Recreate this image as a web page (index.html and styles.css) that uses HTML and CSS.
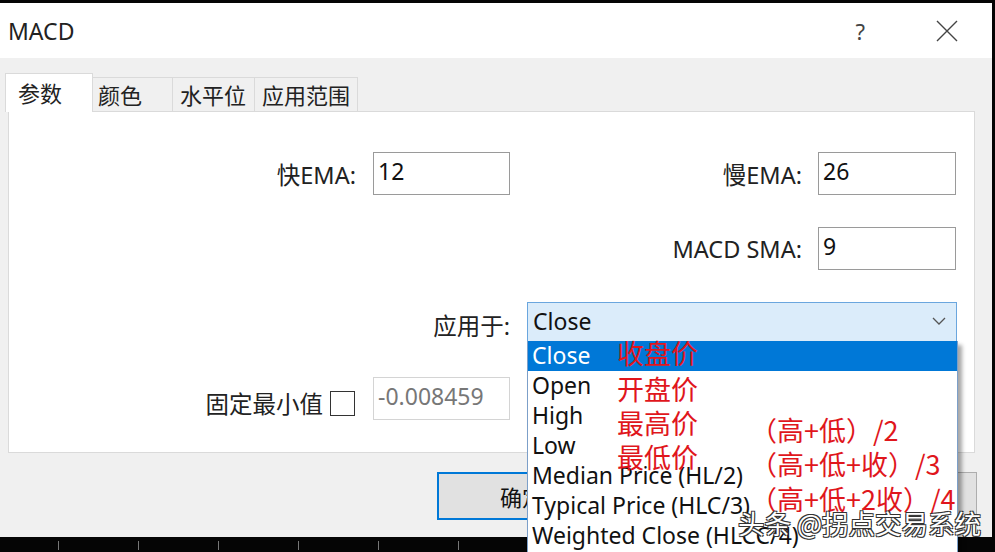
FILE: index.html
```html
<!DOCTYPE html>
<html lang="zh">
<head>
    <meta charset="UTF-8">
    <meta name="viewport" content="width=device-width, initial-scale=1.0">
    <title>MACD</title>
    <link rel="stylesheet" href="styles.css">
</head>
<body>
    <div class="screen">
        <div class="dialog">
            <div class="titlebar">
                <span class="title">MACD</span>
                <span class="help">?</span>
                <svg class="close" width="22" height="22" viewBox="0 0 22 22">
                    <path d="M1 1 L21 21 M21 1 L1 21" stroke="#444" stroke-width="1.4" fill="none"/>
                </svg>
            </div>

            <div class="tabs">
                <div class="tab active">参数</div>
                <div class="tab">颜色</div>
                <div class="tab">水平位</div>
                <div class="tab">应用范围</div>
            </div>

            <div class="panel">
                <div class="form">
                    <label class="label">快EMA:</label>
                    <input class="field" type="text" value="12">
                    <label class="label">慢EMA:</label>
                    <input class="field" type="text" value="26">

                    <label class="label col3">MACD SMA:</label>
                    <input class="field" type="text" value="9">

                    <label class="label wide">应用于:</label>
                    <div class="select">
                        <span>Close</span>
                        <svg class="chevron" width="14" height="8" viewBox="0 0 14 8">
                            <path d="M1 1 L7 7 L13 1" stroke="#555" stroke-width="1.3" fill="none"/>
                        </svg>
                        <ul class="list">
                            <li class="selected">Close</li>
                            <li>Open</li>
                            <li>High</li>
                            <li>Low</li>
                            <li>Median Price (HL/2)</li>
                            <li>Typical Price (HLC/3)</li>
                            <li>Weighted Close (HLCC/4)</li>
                            <!-- annotations drawn over the list -->
                            <span class="note n1">收盘价</span>
                            <span class="note n2">开盘价</span>
                            <span class="note n3">最高价</span>
                            <span class="note n4">最低价</span>
                            <span class="note n5">（高+低）/2</span>
                            <span class="note n6">（高+低+收）/3</span>
                            <span class="note n7">（高+低+2收）/4</span>
                        </ul>
                    </div>

                    <div class="label check-row">固定最小值 <span class="checkbox"></span></div>
                    <input class="field disabled" type="text" value="-0.008459" disabled>
                </div>
            </div>

            <div class="buttons">
                <button class="btn default">确定</button>
                <button class="btn">取消</button>
                <button class="btn">重置</button>
            </div>
        </div>
        <div class="axis"></div>
        <div class="watermark">头条 @拐点交易系统</div>
    </div>
</body>
</html>
```

FILE: styles.css
```css
body {
    margin: 0;
    padding: 0;
    background-color: #000;
    font-family: "Noto Sans", "Noto Sans CJK SC", sans-serif;
    color: #1a1a1a;
}
.screen {
    position: relative;
    width: 995px;
    height: 552px;
    padding-top: 3px;
    box-sizing: border-box;
    overflow: hidden;
    background-color: #050505;
}
.dialog {
    width: 992px;
    height: 534px;
    background-color: #f0f0f0;
}
.titlebar {
    height: 55px;
    display: flex;
    align-items: center;
    background-color: #fff;
}
.title {
    margin-left: 8px;
    font-size: 23px;
    color: #222;
}
.help {
    margin-left: auto;
    font-size: 22px;
    color: #444;
}
.close {
    margin-left: 71px;
    margin-right: 34px;
}
.tabs {
    position: relative;
    z-index: 1;
    display: flex;
    align-items: flex-end;
    height: 39px;
    margin-top: 15px;
    margin-bottom: -1px;
    padding-left: 5px;
}
.tab {
    height: 35px;
    box-sizing: border-box;
    padding-left: 6px;
    border: 1px solid #dadada;
    border-bottom: none;
    border-left: none;
    font-family: "Noto Sans CJK SC", sans-serif;
    font-size: 22px;
    line-height: 33px;
    color: #222;
}
.tab:nth-child(2) { width: 80px; padding-left: 5px; }
.tab:nth-child(3) { width: 82px; padding-left: 7px; }
.tab:nth-child(4) { width: 103px; padding-left: 7px; }
.tab.active {
    width: 88px;
    height: 39px;
    padding-left: 12px;
    line-height: 37px;
    background-color: #fff;
    border-left: 1px solid #dadada;
}
.panel {
    width: 967px;
    height: 342px;
    margin-left: 8px;
    box-sizing: border-box;
    border: 1px solid #dadada;
    background-color: #fff;
}
.form {
    display: grid;
    grid-template-columns: 364px 137px 308px 138px;
    grid-template-rows: 43px 43px 43px 43px;
    row-gap: 32px;
    align-items: center;
    padding-top: 40px;
}
.label {
    justify-self: end;
    padding-right: 17px;
    font-size: 23.5px;
    color: #222;
}
.label.col3 {
    grid-column: 3;
    padding-right: 16px;
}
.form > .label:nth-child(3) {
    padding-right: 16px;
}
.label.wide {
    grid-column: 1 / 3;
    padding-right: 0;
    padding-top: 2px;
}
.check-row {
    display: flex;
    align-items: center;
    gap: 7px;
    padding-top: 9px;
    padding-right: 18px;
}
.checkbox {
    width: 23px;
    height: 23px;
    border: 1px solid #333;
    background-color: #fff;
}
.field {
    width: 100%;
    height: 43px;
    box-sizing: border-box;
    margin: 0;
    padding: 0 4px 5px;
    border: 1px solid #9a9a9a;
    font-family: "Noto Sans", sans-serif;
    font-size: 23px;
    color: #111;
    background-color: #fff;
}
.field.disabled {
    border-color: #d4d4d4;
    color: #777;
}
.select {
    position: relative;
    grid-column: 3 / 5;
    align-self: start;
    display: flex;
    align-items: center;
    height: 40px;
    box-sizing: border-box;
    margin-left: 17px;
    margin-right: -1px;
    padding-left: 5px;
    padding-bottom: 2px;
    border: 1px solid #6aa6de;
    background-color: #dbecfa;
    font-size: 23px;
    color: #111;
}
.chevron {
    margin-left: auto;
    margin-right: 10px;
}
.list {
    position: absolute;
    z-index: 2;
    top: 100%;
    left: -1px;
    width: 431px;
    height: 240px;
    box-sizing: border-box;
    margin: 0;
    padding: 0;
    list-style: none;
    border: 1px solid #7c9fc9;
    border-top: none;
    background-color: #fff;
    box-shadow: 4px 4px 4px rgba(0, 0, 0, 0.35);
}
.list li {
    height: 30px;
    padding-left: 4px;
    line-height: 28px;
    font-size: 23px;
    color: #111;
    white-space: nowrap;
}
.list li.selected {
    background-color: #0078d7;
    color: #fff;
}
.note {
    position: absolute;
    font-family: "Noto Sans CJK SC", sans-serif;
    font-size: 27px;
    line-height: 30px;
    color: #e0161c;
    white-space: nowrap;
}
.n1 { left: 89px; top: -3px; }
.n2 { left: 89px; top: 33px; }
.n3 { left: 89px; top: 67px; }
.n4 { left: 89px; top: 101px; }
.n5 { left: 222px; top: 74px; }
.n6 { left: 222px; top: 108px; }
.n7 { left: 222px; top: 143px; }
.buttons {
    display: flex;
    gap: 15px;
    margin-top: 19px;
    padding-left: 437px;
}
.btn {
    width: 170px;
    height: 48px;
    flex-shrink: 0;
    border: 1px solid #adadad;
    background-color: #e1e1e1;
    font-family: "Noto Sans CJK SC", sans-serif;
    font-size: 22px;
    color: #111;
}
.btn.default {
    border: 2px solid #0078d7;
}
.axis {
    height: 15px;
    background-image: repeating-linear-gradient(90deg, transparent 0, transparent 58px, #777 58px, #777 59px, transparent 59px, transparent 80px);
    background-size: 100% 9px;
    background-position: 0 4px;
    background-repeat: no-repeat;
}
.watermark {
    position: absolute;
    z-index: 3;
    left: 738px;
    top: 503px;
    font-family: "Noto Sans CJK SC", sans-serif;
    font-size: 26.5px;
    color: #fff;
    white-space: nowrap;
    text-shadow: 1px 1px 0 #333, -1px -1px 0 #333, 1px -1px 0 #333, -1px 1px 0 #333;
}
```
